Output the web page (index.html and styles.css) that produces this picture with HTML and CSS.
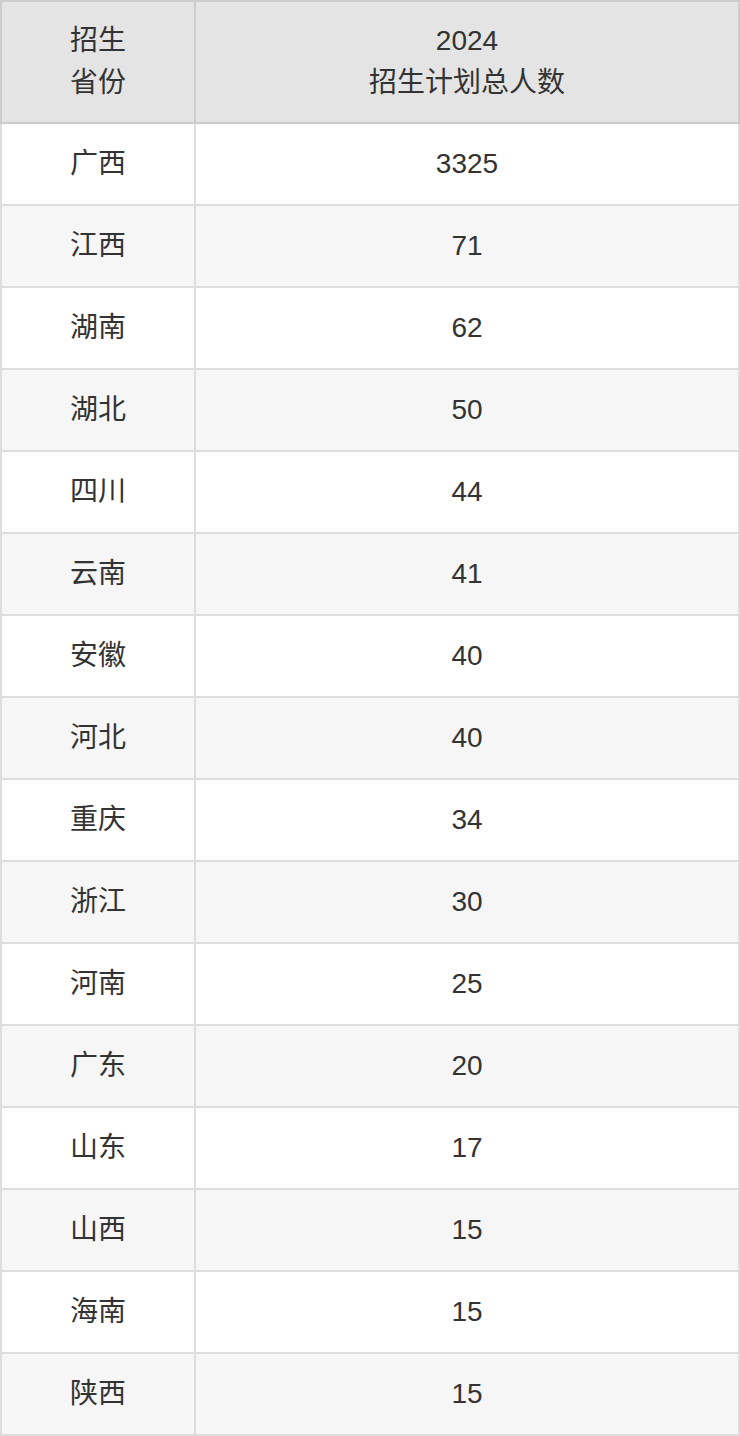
FILE: index.html
```html
<!DOCTYPE html>
<html lang="zh-CN">
<head>
<meta charset="utf-8">
<title>招生计划</title>
<link rel="stylesheet" href="styles.css">
</head>
<body>
<table class="plan">
  <thead>
    <tr><th class="c1">招生<br>省份</th><th class="c2">2024<br>招生计划总人数</th></tr>
  </thead>
  <tbody>
    <tr><td>广西</td><td>3325</td></tr>
    <tr><td>江西</td><td>71</td></tr>
    <tr><td>湖南</td><td>62</td></tr>
    <tr><td>湖北</td><td>50</td></tr>
    <tr><td>四川</td><td>44</td></tr>
    <tr><td>云南</td><td>41</td></tr>
    <tr><td>安徽</td><td>40</td></tr>
    <tr><td>河北</td><td>40</td></tr>
    <tr><td>重庆</td><td>34</td></tr>
    <tr><td>浙江</td><td>30</td></tr>
    <tr><td>河南</td><td>25</td></tr>
    <tr><td>广东</td><td>20</td></tr>
    <tr><td>山东</td><td>17</td></tr>
    <tr><td>山西</td><td>15</td></tr>
    <tr><td>海南</td><td>15</td></tr>
    <tr><td>陕西</td><td>15</td></tr>
  </tbody>
</table>
</body>
</html>
```
FILE: styles.css
```css
html, body {
  margin: 0;
  padding: 0;
  background: #ffffff;
}
.plan {
  width: 740px;
  border-collapse: collapse;
  table-layout: fixed;
  font-family: "Liberation Sans", "Noto Sans CJK SC", sans-serif;
  font-size: 28px;
  line-height: 42px;
  color: #333333;
}
.plan th {
  font-weight: normal;
  background: #e4e4e4;
  border: 2px solid #cccccc;
  padding: 18px 0;
  text-align: center;
  vertical-align: middle;
}
.plan .c1 { width: 192px; }
.plan td {
  border: 2px solid #dddddd;
  padding: 19px 0;
  text-align: center;
  vertical-align: middle;
  height: 42px;
}
.plan tbody tr:nth-child(even) td {
  background: #f6f6f6;
}
```
